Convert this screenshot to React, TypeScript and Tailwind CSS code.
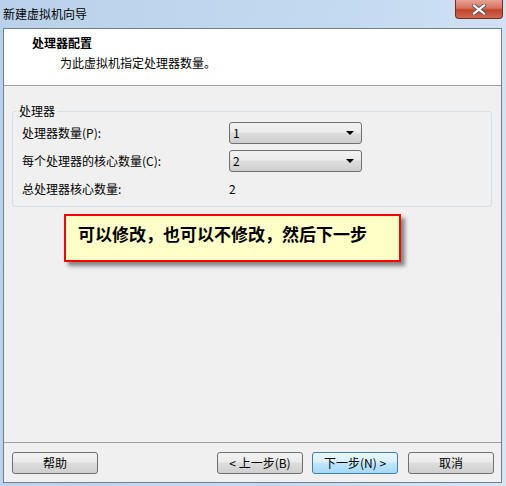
const ui = { fontFamily: '"Noto Sans CJK SC", "Liberation Sans", sans-serif' };

function Combo({ value }: { value: string }) {
  return (
    <div className="w-[133px] h-[22px] border border-[#707070] rounded-[3px] bg-[linear-gradient(#f2f2f2_0%,#ebebeb_45%,#dddddd_50%,#cfcfcf_100%)] flex items-center justify-between pl-[3px] pr-[7px]">
      <span className="text-[12px] leading-none text-black">{value}</span>
      <svg width="8" height="4" viewBox="0 0 8 4">
        <path d="M0 0 L8 0 L4 4 Z" fill="#000" />
      </svg>
    </div>
  );
}

function Btn({ label, primary }: { label: string; primary?: boolean }) {
  return (
    <button
      className={
        "w-[86px] h-[22px] rounded-[3px] border text-[12px] leading-none text-black flex items-center justify-center " +
        (primary
          ? "border-[#3c7fb1] bg-[linear-gradient(#eaf6fd_0%,#d9f0fc_45%,#bee6fd_50%,#a7d9f5_100%)]"
          : "border-[#707070] bg-[linear-gradient(#f2f2f2_0%,#ebebeb_45%,#dddddd_50%,#cfcfcf_100%)]")
      }
    >
      {label}
    </button>
  );
}

export default function App() {
  return (
    <div
      style={ui}
      className="w-[506px] h-[486px] bg-[linear-gradient(100deg,#b9d1ea_0%,#c4daf0_60%,#d6e6f6_100%)] flex flex-col pl-[3px] pr-[4px] pb-[3px]"
    >
      {/* title bar */}
      <div className="h-[28px] flex items-start justify-between">
        <div className="text-[12px] text-black leading-none pt-[8px]">新建虚拟机向导</div>
        <div className="w-[48px] h-[19px] -mr-[1px] rounded-b-[4px] border border-t-0 border-[#7a2a20] bg-[linear-gradient(#e8a393_0%,#d9715d_45%,#c4412b_55%,#cf6a52_100%)] flex items-center justify-center">
          <svg width="14" height="11" viewBox="0 0 14 11">
            <path d="M2 1.5 L12 9.5 M12 1.5 L2 9.5" stroke="#5a5a5a" strokeWidth="4" strokeLinecap="square" />
            <path d="M2 1.5 L12 9.5 M12 1.5 L2 9.5" stroke="#ffffff" strokeWidth="2.2" strokeLinecap="square" />
          </svg>
        </div>
      </div>

      {/* client area */}
      <div className="flex-1 flex flex-col border border-[#6e7f90] bg-[#f0f0f0]">
        <div className="h-[57px] bg-white border-b border-[#a0a0a0] pl-[28px] pt-[6px]">
          <div className="text-[12px] font-bold leading-[16px] text-black">处理器配置</div>
          <div className="text-[12px] leading-[16px] text-black pl-[28px] pt-[4px]">为此虚拟机指定处理器数量。</div>
        </div>

        <div className="flex-1 flex flex-col">
          <fieldset className="ml-[8px] mr-[9px] mt-[17px] border border-[#d5dfe5] rounded-[3px] pl-[9px] pb-[6px]">
            <legend className="text-[12px] leading-[16px] text-black px-[2px] -ml-[5px]">处理器</legend>
            <div className="flex flex-col gap-[6px] pt-[3px]">
              <div className="flex items-center h-[22px]">
                <span className="w-[207px] text-[12px] text-black">处理器数量(P):</span>
                <Combo value="1" />
              </div>
              <div className="flex items-center h-[22px]">
                <span className="w-[207px] text-[12px] text-black">每个处理器的核心数量(C):</span>
                <Combo value="2" />
              </div>
              <div className="flex items-center h-[22px]">
                <span className="w-[207px] text-[12px] text-black">总处理器核心数量:</span>
                <span className="text-[12px] text-black">2</span>
              </div>
            </div>
          </fieldset>

          <div className="ml-[60px] mt-[7px] w-[337px] h-[48px] border-2 border-[#ff0000] bg-[#ffffc8] shadow-[4px_4px_4px_rgba(0,0,0,0.45)] pl-[12px] pt-[6px]">
            <span className="text-[17px] font-bold leading-[20px] text-black">可以修改，也可以不修改，然后下一步</span>
          </div>
        </div>

        <div className="h-[40px] border-t border-[#a0a0a0] flex items-start pt-[9px] pl-[8px]">
          <Btn label="帮助" />
          <div className="ml-[119px] flex gap-[9px]">
            <Btn label="< 上一步(B)" />
            <Btn label="下一步(N) >" primary />
          </div>
          <div className="ml-[10px]">
            <Btn label="取消" />
          </div>
        </div>
      </div>
    </div>
  );
}
